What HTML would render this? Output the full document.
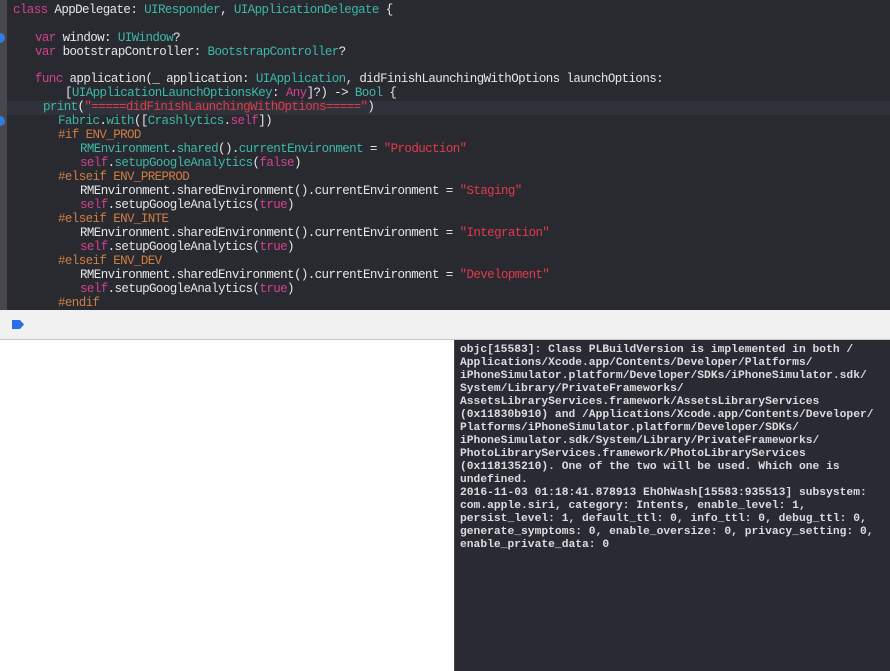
<!DOCTYPE html>
<html><head><meta charset="utf-8"><style>
body{margin:0;width:890px;height:671px;overflow:hidden;background:#fff;position:relative;font-family:"Liberation Mono",monospace}
#ed{position:absolute;left:0;top:0;width:890px;height:310px;background:#292a30}
#gut{position:absolute;left:0;top:0;width:7px;height:310px;background:#47474d}
.bp{position:absolute;left:0;width:5px;height:10px;background:#2f7de1;border-radius:0 5px 5px 0}
#hl{position:absolute;left:7px;top:101px;width:883px;height:14px;background:#2f323a}
.l{position:absolute;font-size:12.5px;letter-spacing:-0.6px;line-height:14px;white-space:pre;color:#e6e6e8}
.k{color:#d3418f}.t{color:#3db8a6}.s{color:#e13a4c}.p{color:#cf7d45}
#tb{position:absolute;left:0;top:310px;width:890px;height:29px;background:#f1f1f1;border-bottom:1px solid #c8c8c8}
#con{position:absolute;left:454px;top:340px;width:436px;height:331px;background:#2a2a32;border-left:1px solid #444}
#con pre{margin:0;position:absolute;left:5px;top:4px;font-family:"Liberation Mono",monospace;font-size:11.3px;line-height:13px;color:#dcdce0;font-weight:bold}
</style></head><body>
<div id="ed">
<div id="hl"></div>
<div id="gut"></div>
<div class="bp" style="top:33px"></div>
<div class="bp" style="top:116px"></div>
<div class="l" style="left:13px;top:3px"><span class="k">class</span> AppDelegate: <span class="t">UIResponder</span>, <span class="t">UIApplicationDelegate</span> {</div>
<div class="l" style="left:35px;top:31px"><span class="k">var</span> window: <span class="t">UIWindow</span>?</div>
<div class="l" style="left:35px;top:45px"><span class="k">var</span> bootstrapController: <span class="t">BootstrapController</span>?</div>
<div class="l" style="left:35px;top:72px"><span class="k">func</span> application(_ application: <span class="t">UIApplication</span>, didFinishLaunchingWithOptions launchOptions:</div>
<div class="l" style="left:65px;top:86px">[<span class="t">UIApplicationLaunchOptionsKey</span>: <span class="k">Any</span>]?) -&gt; <span class="t">Bool</span> {</div>
<div class="l" style="left:43px;top:100px"><span class="t">print</span>(<span class="s">"=====didFinishLaunchingWithOptions====="</span>)</div>
<div class="l" style="left:58px;top:114px"><span class="t">Fabric</span>.<span class="t">with</span>([<span class="t">Crashlytics</span>.<span class="k">self</span>])</div>
<div class="l" style="left:58px;top:128px"><span class="p">#if ENV_PROD</span></div>
<div class="l" style="left:80px;top:142px"><span class="t">RMEnvironment</span>.<span class="t">shared</span>().<span class="t">currentEnvironment</span> = <span class="s">"Production"</span></div>
<div class="l" style="left:80px;top:156px"><span class="k">self</span>.<span class="t">setupGoogleAnalytics</span>(<span class="k">false</span>)</div>
<div class="l" style="left:58px;top:170px"><span class="p">#elseif ENV_PREPROD</span></div>
<div class="l" style="left:80px;top:184px">RMEnvironment.sharedEnvironment().currentEnvironment = <span class="s">"Staging"</span></div>
<div class="l" style="left:80px;top:198px"><span class="k">self</span>.setupGoogleAnalytics(<span class="k">true</span>)</div>
<div class="l" style="left:58px;top:212px"><span class="p">#elseif ENV_INTE</span></div>
<div class="l" style="left:80px;top:226px">RMEnvironment.sharedEnvironment().currentEnvironment = <span class="s">"Integration"</span></div>
<div class="l" style="left:80px;top:240px"><span class="k">self</span>.setupGoogleAnalytics(<span class="k">true</span>)</div>
<div class="l" style="left:58px;top:254px"><span class="p">#elseif ENV_DEV</span></div>
<div class="l" style="left:80px;top:268px">RMEnvironment.sharedEnvironment().currentEnvironment = <span class="s">"Development"</span></div>
<div class="l" style="left:80px;top:282px"><span class="k">self</span>.setupGoogleAnalytics(<span class="k">true</span>)</div>
<div class="l" style="left:58px;top:296px"><span class="p">#endif</span></div>
</div>
<div id="tb"><svg style="position:absolute;left:12px;top:10px" width="12" height="9"><path d="M0 0H8L12 4.5L8 9H0Z" fill="#2a6fe6"/></svg></div>
<div id="con"><pre>objc[15583]: Class PLBuildVersion is implemented in both /
Applications/Xcode.app/Contents/Developer/Platforms/
iPhoneSimulator.platform/Developer/SDKs/iPhoneSimulator.sdk/
System/Library/PrivateFrameworks/
AssetsLibraryServices.framework/AssetsLibraryServices
(0x11830b910) and /Applications/Xcode.app/Contents/Developer/
Platforms/iPhoneSimulator.platform/Developer/SDKs/
iPhoneSimulator.sdk/System/Library/PrivateFrameworks/
PhotoLibraryServices.framework/PhotoLibraryServices
(0x118135210). One of the two will be used. Which one is
undefined.
2016-11-03 01:18:41.878913 EhOhWash[15583:935513] subsystem:
com.apple.siri, category: Intents, enable_level: 1,
persist_level: 1, default_ttl: 0, info_ttl: 0, debug_ttl: 0,
generate_symptoms: 0, enable_oversize: 0, privacy_setting: 0,
enable_private_data: 0</pre></div>
</body></html>
